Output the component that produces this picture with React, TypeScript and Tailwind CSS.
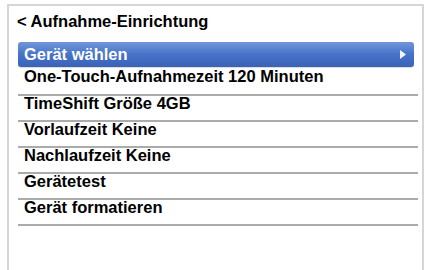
import React from "react";

const rows = [
  "One-Touch-Aufnahmezeit 120 Minuten",
  "TimeShift Größe 4GB",
  "Vorlaufzeit Keine",
  "Nachlaufzeit Keine",
  "Gerätetest",
  "Gerät formatieren",
];

export default function App() {
  return (
    <div
      className="w-[426px] h-[270px] bg-white overflow-hidden pt-[4px] pl-[7px] pr-[2px]"
      style={{ fontFamily: '"Liberation Sans", Arial, sans-serif' }}
    >
      <div className="h-[280px] border-l-2 border-t-2 border-r-2 border-[#d6d6d6] bg-white">
        <div className="pl-[8px] pt-[7px] text-[16.5px] leading-[16px] font-bold text-black">
          &lt; Aufnahme-Einrichtung
        </div>
        <div className="ml-[9px] w-[400px] mt-[13px]">
          <div className="h-[25px] w-[396px] rounded-[3px] bg-gradient-to-b from-[#7196da] via-[#4672c8] to-[#3a63b7] flex items-start justify-between pl-[6px] pr-[8px] pt-[5px] shadow-[0_1px_1px_rgba(0,0,0,0.15)]">
            <span className="text-[16.5px] leading-[14px] font-bold text-white">Gerät wählen</span>
            <svg width="6" height="9" viewBox="0 0 6 9" className="mt-[3px]">
              <polygon points="0,0 6,4.5 0,9" fill="#f2f5fb" />
            </svg>
          </div>
          {rows.map((r, i) => (
            <div
              key={r}
              className={`${i === 0 ? "h-[29px] pt-[2px]" : "h-[26px]"} border-b-2 border-[#ababab] pl-[6px] text-[16.5px] leading-[14px] font-bold text-black`}
            >
              {r}
            </div>
          ))}
        </div>
      </div>
    </div>
  );
}
